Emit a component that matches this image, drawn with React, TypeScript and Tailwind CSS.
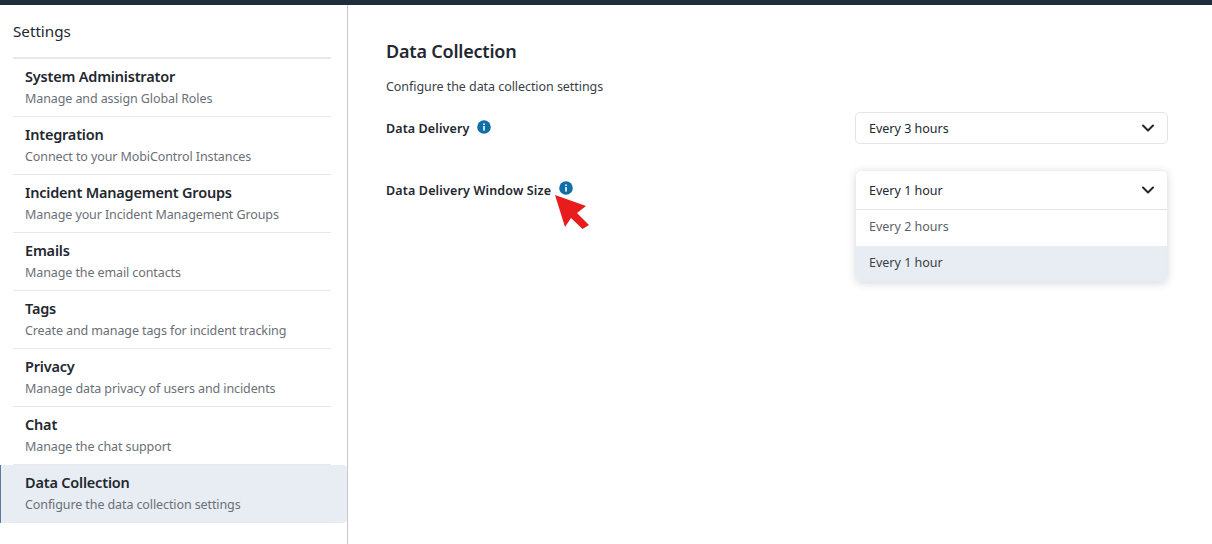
import { ChevronDown } from "lucide-react";

const items = [
  { title: "System Administrator", desc: "Manage and assign Global Roles" },
  { title: "Integration", desc: "Connect to your MobiControl Instances" },
  { title: "Incident Management Groups", desc: "Manage your Incident Management Groups" },
  { title: "Emails", desc: "Manage the email contacts" },
  { title: "Tags", desc: "Create and manage tags for incident tracking" },
  { title: "Privacy", desc: "Manage data privacy of users and incidents" },
  { title: "Chat", desc: "Manage the chat support" },
  { title: "Data Collection", desc: "Configure the data collection settings", active: true },
];

function InfoIcon() {
  return (
    <svg width="14" height="14" viewBox="0 0 14 14" className="shrink-0">
      <circle cx="7" cy="7" r="6.8" fill="#0f6fa6" />
      <rect x="6.2" y="6" width="1.6" height="4.6" fill="#fff" />
      <rect x="6.2" y="3.4" width="1.6" height="1.6" fill="#fff" />
    </svg>
  );
}

export default function App() {
  return (
    <div className="h-[544px] w-[1212px] overflow-hidden bg-white font-['Noto_Sans',sans-serif] text-[#23272f]">
      <div className="h-[5px] bg-[#1f2d3d]" />
      <div className="flex h-[539px]">
        <aside className="w-[348px] shrink-0 border-r border-[#c8c8c8]">
          <h1 className="flex h-[52px] items-center pl-[13px] pt-[1px] text-[15.2px] leading-none">Settings</h1>
          <div className="mr-[16px] ml-[13px] h-[2px] bg-[#e8e8e8]" />
          <ul>
            {items.map((item) => (
              <li key={item.title} className="relative h-[58px]">
                {item.active && (
                  <div className="absolute inset-x-0 top-0 bottom-0 rounded-r-[4px] border-l border-[#5a7a9e] bg-[#e8edf4]" />
                )}
                <div className="relative ml-[13px] mr-[16px] h-full border-b border-[#e8e8e8] pl-[12px] pt-[7px]">
                  <div className="text-[14.5px] leading-[21px] font-semibold tracking-[-0.2px] text-[#23272f]">{item.title}</div>
                  <div className="mt-[2px] text-[12.5px] leading-[20px] tracking-[-0.1px] text-[#6b6f76]">{item.desc}</div>
                </div>
              </li>
            ))}
          </ul>
        </aside>

        <main className="relative flex-1 pl-[38px] pr-[44px] pt-[34px]">
          <h2 className="text-[18px] leading-[24px] font-semibold tracking-[-0.2px] text-[#23272f]">Data Collection</h2>
          <p className="mt-[14px] text-[12.5px] leading-[20px] tracking-[-0.06px] text-[#3a3f47]">Configure the data collection settings</p>

          <div className="mt-[14px] flex h-[33px] items-center justify-between">
            <div className="flex items-center gap-[8px] pt-[4px]">
              <span className="text-[12.5px] font-semibold tracking-[0.1px] text-[#23272f]">Data Delivery</span>
              <span className="mb-[5px]"><InfoIcon /></span>
            </div>
            <div className="flex h-[32px] w-[313px] items-center justify-between rounded-[5px] border border-[#e4e4e4] pl-[13px] pr-[9px] text-[12.5px] text-[#23272f]">
              <span className="pt-[4px]">Every 3 hours</span>
              <ChevronDown size={20} strokeWidth={2.4} />
            </div>
          </div>

          <div className="mt-[27px] flex h-[40px] items-center justify-between">
            <div className="flex items-center gap-[8px]">
              <span className="text-[12.5px] font-semibold tracking-[0.15px] text-[#23272f]">Data Delivery Window Size</span>
              <span className="mb-[6px]"><InfoIcon /></span>
            </div>
            <div className="relative h-[40px] w-[313px]">
              <div className="absolute inset-x-[1px] top-0 z-10 overflow-hidden rounded-[5px] bg-white text-[12.5px] shadow-[0_1px_8px_rgba(60,70,90,0.24)]">
                <div className="flex h-[39px] items-center justify-between border-b border-[#e4e4e4] pl-[13px] pr-[9px] text-[#23272f]">
                  <span className="pt-[2px]">Every 1 hour</span>
                  <ChevronDown size={20} strokeWidth={2.4} />
                </div>
                <div className="flex h-[36px] items-center px-[13px] text-[#5b5f66]">
                  <span className="pb-[2px]">Every 2 hours</span>
                </div>
                <div className="flex h-[36px] items-center bg-[#e8edf4] px-[13px] text-[#3a3f47]">
                  <span className="pb-[2px]">Every 1 hour</span>
                </div>
              </div>
            </div>
          </div>

          <svg width="36" height="36" viewBox="0 0 36 36" className="absolute left-[206px] top-[189px]">
            <path d="M1 1 L32 12 L23 19 L35 31 L28.5 35 L17 24 L11 33 Z" fill="#e81c1c" />
          </svg>
        </main>
      </div>
    </div>
  );
}
